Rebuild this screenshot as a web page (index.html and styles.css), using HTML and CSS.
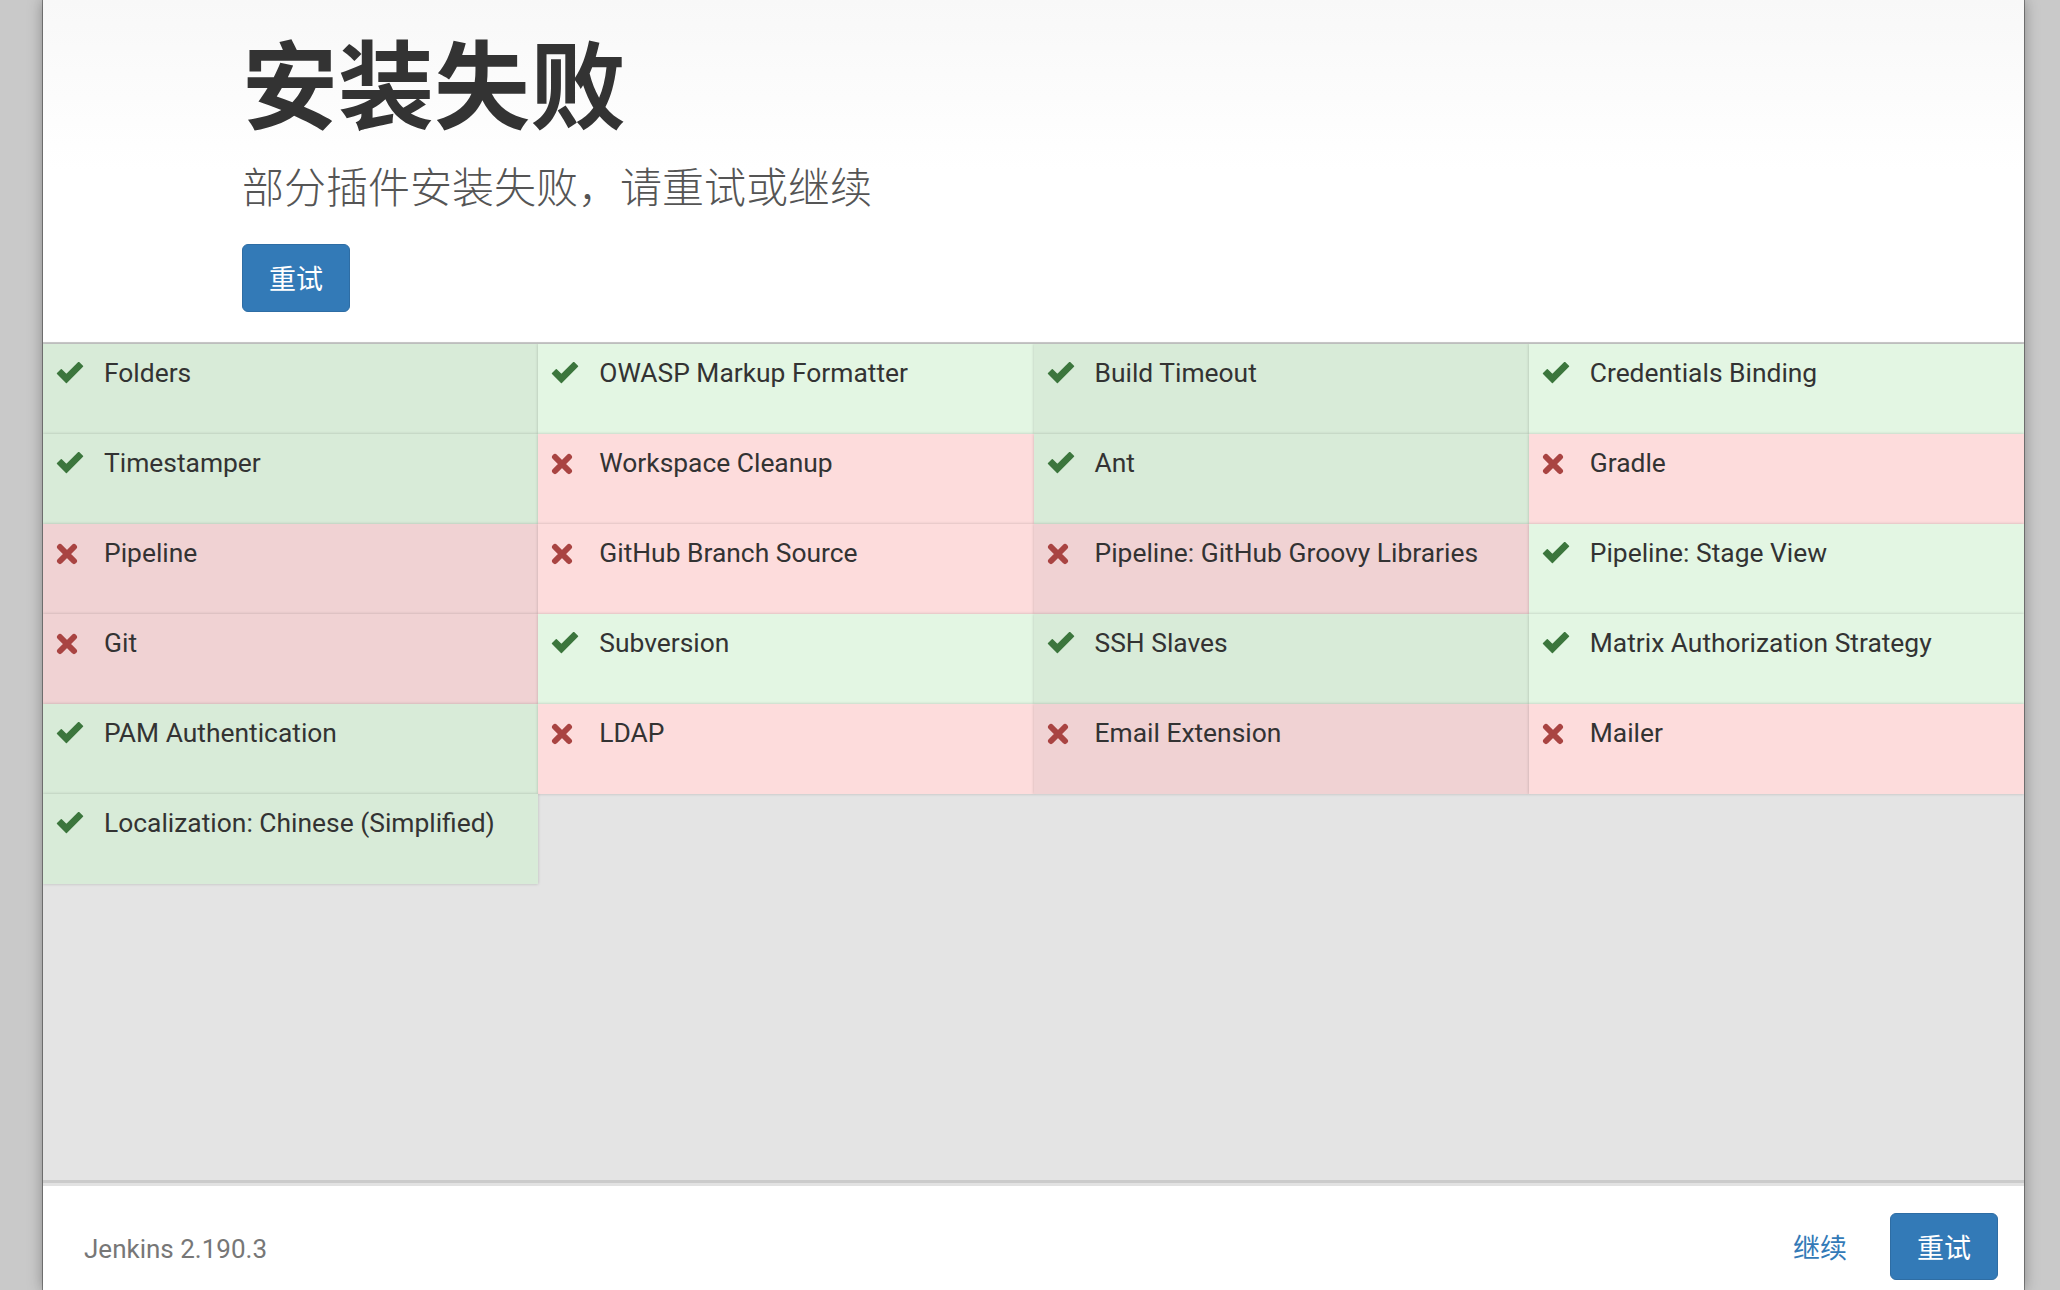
FILE: index.html
```html
<!DOCTYPE html>
<html lang="zh-CN">
<head>
<meta charset="utf-8">
<title>安装失败 - Jenkins</title>
<link rel="stylesheet" href="styles.css">
</head>
<body>
<svg width="0" height="0" class="defs" aria-hidden="true">
  <defs>
    <symbol id="i-ok" viewBox="0 0 28 22">
      <path d="M1.5 11.5 L5.3 7.7 L10.4 12.8 L22.7 0.5 L26.5 4.3 L10.4 20.4 Z" fill="#3c763d" stroke="#3c763d" stroke-width="1.4" stroke-linejoin="round"/>
    </symbol>
    <symbol id="i-fail" viewBox="0 0 22 22">
      <path d="M4 4 L18 18 M18 4 L4 18" stroke="#a94442" stroke-width="6" stroke-linecap="round" fill="none"/>
    </symbol>
  </defs>
</svg>
<div class="modal">
  <header class="head">
    <h1 class="title">安装失败</h1>
    <p class="subtitle">部分插件安装失败，请重试或继续</p>
    <button class="btn btn-primary">重试</button>
  </header>

  <section class="progress">
    <div class="plugin-grid">
      <div class="plugin ok"><svg class="ico"><use href="#i-ok"/></svg><span class="name">Folders</span></div>
      <div class="plugin ok"><svg class="ico"><use href="#i-ok"/></svg><span class="name">OWASP Markup Formatter</span></div>
      <div class="plugin ok"><svg class="ico"><use href="#i-ok"/></svg><span class="name">Build Timeout</span></div>
      <div class="plugin ok"><svg class="ico"><use href="#i-ok"/></svg><span class="name">Credentials Binding</span></div>

      <div class="plugin ok"><svg class="ico"><use href="#i-ok"/></svg><span class="name">Timestamper</span></div>
      <div class="plugin fail"><svg class="ico x"><use href="#i-fail"/></svg><span class="name">Workspace Cleanup</span></div>
      <div class="plugin ok"><svg class="ico"><use href="#i-ok"/></svg><span class="name">Ant</span></div>
      <div class="plugin fail"><svg class="ico x"><use href="#i-fail"/></svg><span class="name">Gradle</span></div>

      <div class="plugin fail"><svg class="ico x"><use href="#i-fail"/></svg><span class="name">Pipeline</span></div>
      <div class="plugin fail"><svg class="ico x"><use href="#i-fail"/></svg><span class="name">GitHub Branch Source</span></div>
      <div class="plugin fail"><svg class="ico x"><use href="#i-fail"/></svg><span class="name">Pipeline: GitHub Groovy Libraries</span></div>
      <div class="plugin ok"><svg class="ico"><use href="#i-ok"/></svg><span class="name">Pipeline: Stage View</span></div>

      <div class="plugin fail"><svg class="ico x"><use href="#i-fail"/></svg><span class="name">Git</span></div>
      <div class="plugin ok"><svg class="ico"><use href="#i-ok"/></svg><span class="name">Subversion</span></div>
      <div class="plugin ok"><svg class="ico"><use href="#i-ok"/></svg><span class="name">SSH Slaves</span></div>
      <div class="plugin ok"><svg class="ico"><use href="#i-ok"/></svg><span class="name">Matrix Authorization Strategy</span></div>

      <div class="plugin ok"><svg class="ico"><use href="#i-ok"/></svg><span class="name">PAM Authentication</span></div>
      <div class="plugin fail"><svg class="ico x"><use href="#i-fail"/></svg><span class="name">LDAP</span></div>
      <div class="plugin fail"><svg class="ico x"><use href="#i-fail"/></svg><span class="name">Email Extension</span></div>
      <div class="plugin fail"><svg class="ico x"><use href="#i-fail"/></svg><span class="name">Mailer</span></div>

      <div class="plugin ok"><svg class="ico"><use href="#i-ok"/></svg><span class="name">Localization: Chinese (Simplified)</span></div>
    </div>
  </section>

  <footer class="foot">
    <span class="version">Jenkins 2.190.3</span>
    <div class="actions">
      <a class="link-continue" href="#">继续</a>
      <button class="btn btn-primary">重试</button>
    </div>
  </footer>
</div>
</body>
</html>
```

FILE: styles.css
```css
html, body {
  margin: 0;
  padding: 0;
  height: 100%;
  overflow: hidden;
}

body {
  background: #c9c9c9;
  font-family: Roboto, "Noto Sans CJK SC", "Liberation Sans", sans-serif;
  color: #333;
}

.defs {
  position: absolute;
  width: 0;
  height: 0;
  overflow: hidden;
}

.modal {
  margin-left: 43px;
  width: 1981px;
  height: 1290px;
  background: #fff;
  display: flex;
  flex-direction: column;
  overflow: hidden;
  box-shadow: 0 0 0 1px rgba(0, 0, 0, 0.35), 0 0 14px rgba(0, 0, 0, 0.35);
}

/* header */
.head {
  padding: 27px 0 30px 199px;
  background: linear-gradient(#f8f8f8, #ffffff 170px);
}

.title {
  margin: 0;
  font-family: "Noto Sans CJK SC", sans-serif;
  font-size: 96px;
  line-height: 1.1;
  font-weight: 700;
  color: #333;
}

.subtitle {
  margin: 27px 0 0;
  font-family: "Noto Sans CJK SC Light", "Noto Sans CJK SC DemiLight", "Noto Sans CJK SC", sans-serif;
  font-size: 42px;
  line-height: 1.2;
  font-weight: 300;
  color: #555;
}

.btn {
  font-family: "Noto Sans CJK SC", sans-serif;
  font-size: 27px;
  line-height: 1;
  border-radius: 6px;
  cursor: pointer;
}

.btn-primary {
  background: #337ab7;
  border: 1px solid #2e6da4;
  color: #fff;
}

.head .btn {
  display: block;
  margin-top: 34px;
  width: 108px;
  height: 68px;
}

/* plugin progress area */
.progress {
  height: 836px;
  border-top: 2px solid #cdcdcd;
  background: #e4e4e4;
  flex: none;
}

.plugin-grid {
  display: grid;
  grid-template-columns: repeat(4, 1fr);
  grid-auto-rows: 90px;
}

.plugin {
  display: flex;
  align-items: flex-start;
  padding: 11px 12px 0 13px;
  box-shadow: 0 0 3px rgba(0, 0, 0, 0.2);
  position: relative;
}

.plugin.ok { background: #d8ebd8; }
.plugin.ok:nth-child(even) { background: #e3f6e3; }
.plugin.fail { background: #f0d2d3; }
.plugin.fail:nth-child(even) { background: #fddcdc; }

.ico {
  flex: none;
  width: 28px;
  height: 22px;
  margin: 7px 20px 0 0;
}

.ico.x {
  width: 22px;
  height: 22px;
  margin-right: 26px;
  margin-top: 8px;
}

.name {
  font-size: 26.4px;
  line-height: 37px;
  color: #333;
}

/* footer */
.foot {
  flex: none;
  border-top: 3px solid #cbcbcb;
  box-shadow: inset 0 3px 0 #e2e2e2;
  padding: 30px 26px 26px 41px;
  display: flex;
  align-items: center;
  justify-content: space-between;
  background: #fff;
}

.version {
  font-size: 26px;
  color: #777;
  margin-top: 6px;
}

.actions {
  display: flex;
  align-items: center;
}

.link-continue {
  font-family: "Noto Sans CJK SC", sans-serif;
  font-size: 27px;
  color: #337ab7;
  text-decoration: none;
  margin-right: 43px;
}

.foot .btn {
  width: 108px;
  height: 67px;
}
```
